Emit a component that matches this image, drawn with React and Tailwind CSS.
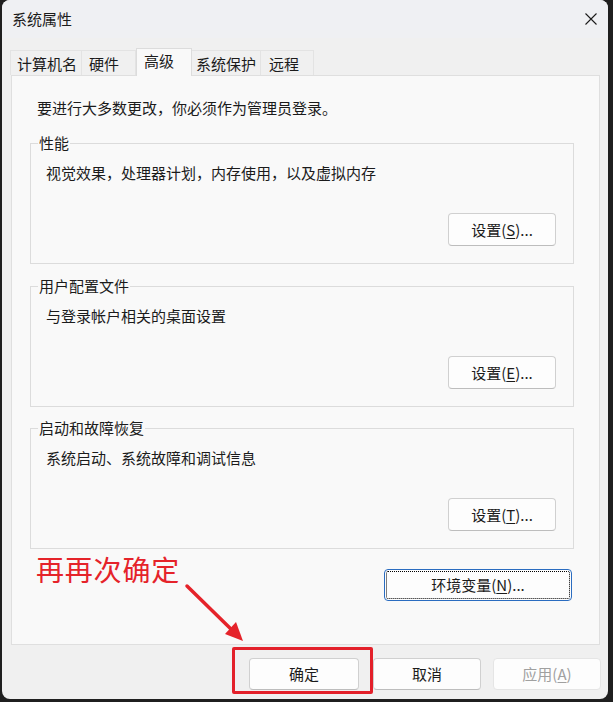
import React from "react";

const tabs = [
  { label: "计算机名", w: "w-[72px]", pl: "pl-[6px]" },
  { label: "硬件", w: "w-[54px]", pl: "pl-[7px]" },
  { label: "高级", w: "w-[56px]", pl: "pl-[7px]", active: true },
  { label: "系统保护", w: "w-[69px]", pl: "pl-[4px]" },
  { label: "远程", w: "w-[53px]", pl: "pl-[8px]" },
];

const groups = [
  { title: "性能", desc: "视觉效果，处理器计划，内存使用，以及虚拟内存" },
  { title: "用户配置文件", desc: "与登录帐户相关的桌面设置" },
  { title: "启动和故障恢复", desc: "系统启动、系统故障和调试信息" },
];

function Btn({ children, className = "" }) {
  return (
    <button
      type="button"
      className={`h-[32px] rounded-[4px] border border-[#d0d0d0] border-b-[#bdbdbd] bg-[#fdfdfd] text-[15px] leading-[20px] text-[#1b1b1b] flex items-center justify-center ${className}`}
    >
      {children}
    </button>
  );
}

function GroupBox({ title, desc, hotkey, className }) {
  return (
    <div className={`relative h-[121px] border border-[#dcdcdc] flex flex-col ${className}`}>
      <span className="absolute -top-[11px] left-[7px] px-[1px] bg-[#f9f9f9] text-[15px] leading-[20px]">
        {title}
      </span>
      <p className="pl-[15px] pt-[19px] text-[15px] leading-[20px]">{desc}</p>
      <Btn className="self-end mr-[17px] mt-[30px] w-[108px] h-[33px]">
        设置(<span className="underline underline-offset-2">{hotkey}</span>)...
      </Btn>
    </div>
  );
}

export default function App() {
  return (
    <div className="relative w-[613px] h-[702px] bg-[#1f1f1f] overflow-hidden font-['Noto_Sans_CJK_SC',sans-serif] text-[#1b1b1b]">
      <div className="ml-[2px] w-[606px] h-[699px] rounded-[8px] bg-[#f0f0f0] flex flex-col">
        {/* title bar */}
        <div className="h-[38px] flex items-center justify-between pl-[10px] pr-[11px] rounded-t-[8px] bg-[#eff0f3]">
          <span className="text-[15px] leading-[20px]">系统属性</span>
          <svg width="12" height="12" viewBox="0 0 12 12" className="text-[#1b1b1b]">
            <path d="M0.5 0.5 L11.5 11.5 M11.5 0.5 L0.5 11.5" stroke="currentColor" strokeWidth="1.1" />
          </svg>
        </div>

        {/* tabs */}
        <div className="mt-[10px] ml-[8px] h-[27px] flex items-end">
          {tabs.map((t) =>
            t.active ? (
              <div
                key={t.label}
                className={`${t.w} ${t.pl} h-[28px] -mb-[1px] relative z-10 border border-b-0 border-[#dcdcdc] bg-[#f9f9f9] text-[15px] leading-[20px] pt-[2px]`}
              >
                {t.label}
              </div>
            ) : (
              <div
                key={t.label}
                className={`${t.w} ${t.pl} h-[25px] border border-b-0 border-l-0 first:border-l border-[#e3e3e3] bg-[#f0f0f0] text-[15px] leading-[20px] pt-[3px]`}
              >
                {t.label}
              </div>
            )
          )}
        </div>

        {/* panel */}
        <div className="ml-[9px] w-[589px] h-[570px] border border-[#dfdfdf] bg-[#f9f9f9] flex flex-col pl-[18px] pr-[25px]">
          <p className="pl-[7px] pt-[22px] text-[15px] leading-[20px]">
            要进行大多数更改，你必须作为管理员登录。
          </p>
          <GroupBox {...groups[0]} hotkey="S" className="mt-[25px]" />
          <GroupBox {...groups[1]} hotkey="E" className="mt-[22px]" />
          <GroupBox {...groups[2]} hotkey="T" className="mt-[21px]" />
          <button
            type="button"
            className="self-end mr-[2px] mt-[20px] w-[188px] h-[32px] rounded-[4px] border border-[#2a6cc0] bg-[#fdfdfd] outline outline-1 outline-dotted outline-black -outline-offset-3 text-[15px] leading-[20px]"
          >
            环境变量(<span className="underline underline-offset-2">N</span>)...
          </button>
        </div>

        {/* footer buttons */}
        <div className="mt-[13px] flex justify-end pr-[7px]">
          <Btn className="w-[110px]">确定</Btn>
          <Btn className="w-[108px] ml-[14px]">取消</Btn>
          <Btn className="w-[108px] ml-[12px] bg-[#f6f6f6] border-[#e5e5e5] border-b-[#e5e5e5] text-[#a0a0a0]">
            应用(<span className="underline underline-offset-2">A</span>)
          </Btn>
        </div>
      </div>

      {/* annotation overlay */}
      <div className="absolute left-[36px] top-[551px] text-[28px] leading-[36px] text-[#e5232a] tracking-[0.8px]">
        再再次确定
      </div>
      <svg className="absolute left-0 top-0 pointer-events-none" width="613" height="702">
        <line x1="187" y1="586" x2="234" y2="632" stroke="#e5232a" strokeWidth="3.5" strokeLinecap="round" />
        <polygon points="243,641 225,634 236,622" fill="#e5232a" />
      </svg>
      <div className="absolute left-[232px] top-[647px] w-[141px] h-[47px] border-[3px] border-[#e3202a] rounded-[2px]" />
    </div>
  );
}
